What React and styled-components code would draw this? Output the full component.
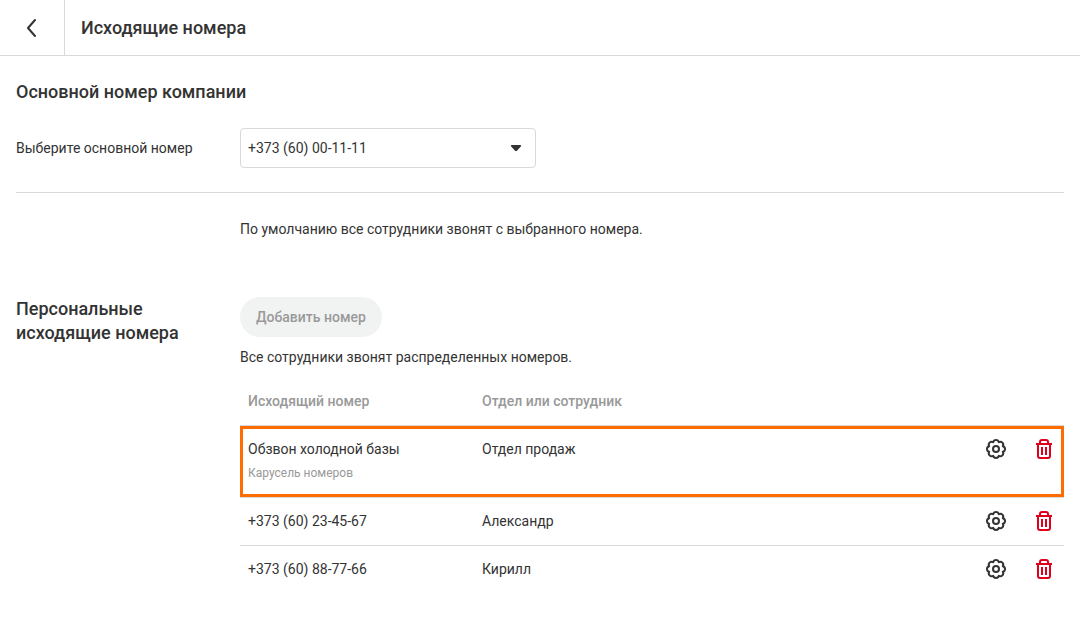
import React from 'react'
import styled, { createGlobalStyle } from 'styled-components'

const ROWS = [
  {
    number: 'Обзвон холодной базы',
    note: 'Карусель номеров',
    owner: 'Отдел продаж',
    highlighted: true,
  },
  { number: '+373 (60) 23-45-67', owner: 'Александр' },
  { number: '+373 (60) 88-77-66', owner: 'Кирилл' },
]

const BackIcon = () => (
  <svg width="24" height="24" viewBox="0 0 24 24" aria-hidden="true">
    <path
      d="M15 4L8 12L15 20"
      fill="none"
      stroke="currentColor"
      strokeWidth="2"
      strokeLinecap="round"
      strokeLinejoin="round"
    />
  </svg>
)

const GearIcon = () => (
  <svg width="24" height="24" viewBox="0 0 24 24" aria-hidden="true">
    <g
      fill="none"
      stroke="currentColor"
      strokeWidth="2"
      strokeLinejoin="round"
    >
      <path d="M9.17 5.16A2.93 2.93 0 0 1 14.83 5.16A2.93 2.93 0 0 1 18.84 9.17A2.93 2.93 0 0 1 18.84 14.83A2.93 2.93 0 0 1 14.83 18.84A2.93 2.93 0 0 1 9.17 18.84A2.93 2.93 0 0 1 5.16 14.83A2.93 2.93 0 0 1 5.16 9.17A2.93 2.93 0 0 1 9.17 5.16Z" />
      <circle cx="12" cy="12" r="3" />
    </g>
  </svg>
)

const TrashIcon = () => (
  <svg width="24" height="24" viewBox="0 0 24 24" aria-hidden="true">
    <g fill="none" stroke="currentColor" strokeWidth="2">
      <path d="M4 7H20" />
      <path d="M8 7V5A2 2 0 0 1 10 3H14A2 2 0 0 1 16 5V7" />
      <path d="M6 7V19A2 2 0 0 0 8 21H16A2 2 0 0 0 18 19V7" />
      <path d="M10 10V18M14 10V18" />
    </g>
  </svg>
)

const CaretIcon = () => (
  <Caret width="24" height="24" viewBox="0 0 24 24" aria-hidden="true">
    <path
      d="M7.6 9H16.4C17.2 9 17.4 9.9 16.8 10.5L13.2 14.4C12.5 15.2 11.5 15.2 10.8 14.4L7.2 10.5C6.6 9.9 6.8 9 7.6 9Z"
      fill="currentColor"
    />
  </Caret>
)

const App = () => (
  <>
    <GlobalStyle />
    <Header>
      <BackButton type="button" aria-label="Назад">
        <BackIcon />
      </BackButton>
      <PageTitle>Исходящие номера</PageTitle>
    </Header>
    <Content>
      <Heading>Основной номер компании</Heading>
      <Field>
        <label htmlFor="main-number">Выберите основной номер</label>
        <SelectWrapper>
          <Select id="main-number" defaultValue="+373 (60) 00-11-11">
            <option>+373 (60) 00-11-11</option>
          </Select>
          <CaretIcon />
        </SelectWrapper>
      </Field>
      <Columns>
        <Hint>
          По умолчанию все сотрудники звонят с выбранного номера.
        </Hint>
      </Columns>
      <Columns>
        <Heading>Персональные исходящие номера</Heading>
        <div>
          <AddButton type="button" disabled>
            Добавить номер
          </AddButton>
          <Summary>Все сотрудники звонят распределенных номеров.</Summary>
          <NumbersTable />
        </div>
      </Columns>
    </Content>
  </>
)

const NumbersTable = () => (
  <Table>
    <thead>
      <tr>
        <NumberHeader scope="col">Исходящий номер</NumberHeader>
        <HeaderCell scope="col">Отдел или сотрудник</HeaderCell>
        <ActionsHeader aria-label="Действия" />
      </tr>
    </thead>
    <tbody>
      {ROWS.map(({ number, note, owner, highlighted }) => (
        <Row key={number}>
          <Cell>
            {number}
            {note && <Note>{note}</Note>}
            {highlighted && <Frame />}
          </Cell>
          <Cell>{owner}</Cell>
          <Cell>
            <Actions>
              <IconButton type="button" aria-label={`Настроить ${number}`}>
                <GearIcon />
              </IconButton>
              <IconButton
                type="button"
                color="#df0020"
                aria-label={`Удалить ${number}`}
              >
                <TrashIcon />
              </IconButton>
            </Actions>
          </Cell>
        </Row>
      ))}
    </tbody>
  </Table>
)

const GlobalStyle = createGlobalStyle`
  * {
    box-sizing: border-box;
  }
  body {
    margin: 0;
    background: #fff;
    color: #333;
    font: 14px/24px Roboto, 'Liberation Sans', sans-serif;
  }
  button,
  select {
    font: inherit;
    color: inherit;
  }
`

const Header = styled.header`
  display: flex;
  align-items: stretch;
  height: 56px;
  border-bottom: 1px solid #d9d9d9;
`

const BackButton = styled.button`
  display: flex;
  align-items: center;
  justify-content: center;
  width: 65px;
  padding: 0;
  border: 0;
  border-right: 1px solid #d9d9d9;
  background: none;
  cursor: pointer;
`

const PageTitle = styled.h1`
  align-self: center;
  margin: 0;
  padding: 0 16px;
  font-size: 18px;
  font-weight: 500;
`

const Content = styled.main`
  padding: 24px 16px;
`

const Heading = styled.h2`
  margin: 0;
  font-size: 18px;
  font-weight: 500;
`

const Field = styled.div`
  display: grid;
  grid-template-columns: 224px 1fr;
  align-items: center;
  margin: 24px 0;
  padding-bottom: 24px;
  border-bottom: 1px solid #d9d9d9;
`

const SelectWrapper = styled.div`
  position: relative;
  max-width: 296px;
`

const Select = styled.select`
  display: block;
  appearance: none;
  width: 100%;
  height: 40px;
  padding: 0 40px 0 7px;
  border: 1px solid #d9d9d9;
  border-radius: 4px;
  background: #fff;
`

const Caret = styled.svg`
  position: absolute;
  top: 8px;
  right: 8px;
  pointer-events: none;
`

const Columns = styled.section`
  display: grid;
  grid-template-columns: 176px 1fr;
  column-gap: 48px;
  & + & {
    margin-top: 56px;
  }
`

const Hint = styled.p`
  grid-column: 2;
  margin: 0;
`

const AddButton = styled.button`
  display: block;
  height: 40px;
  padding: 0 16px;
  border: 0;
  border-radius: 20px;
  background: #f1f3f3;
  font-weight: 500;
  &:disabled {
    color: #999;
  }
`

const Summary = styled.p`
  margin: 8px 0;
`

const Table = styled.table`
  width: 100%;
  table-layout: fixed;
  border-spacing: 0;
`

const HeaderCell = styled.th`
  height: 48px;
  padding: 0 8px;
  color: #999;
  font-weight: 500;
  text-align: left;
`

const NumberHeader = styled(HeaderCell)`
  width: 234px;
`

const ActionsHeader = styled(HeaderCell).attrs({ as: 'td' })`
  width: 88px;
`

const Row = styled.tr`
  position: relative;
`

const Cell = styled.td`
  padding: 11px 8px 12px;
  border-top: 1px solid #d9d9d9;
  vertical-align: top;
`

const Note = styled.div`
  color: #999;
  font-size: 12px;
`

/* Drawn over the whole row, below its top divider */
const Frame = styled.span`
  position: absolute;
  inset: 1px 0 0;
  border: 3px solid #ff6c00;
  pointer-events: none;
`

const Actions = styled.div`
  display: flex;
  justify-content: flex-end;
  gap: 24px;
`

const IconButton = styled.button`
  display: flex;
  padding: 0;
  border: 0;
  background: none;
  color: ${({ color = '#333' }) => color};
  cursor: pointer;
`

export default App
